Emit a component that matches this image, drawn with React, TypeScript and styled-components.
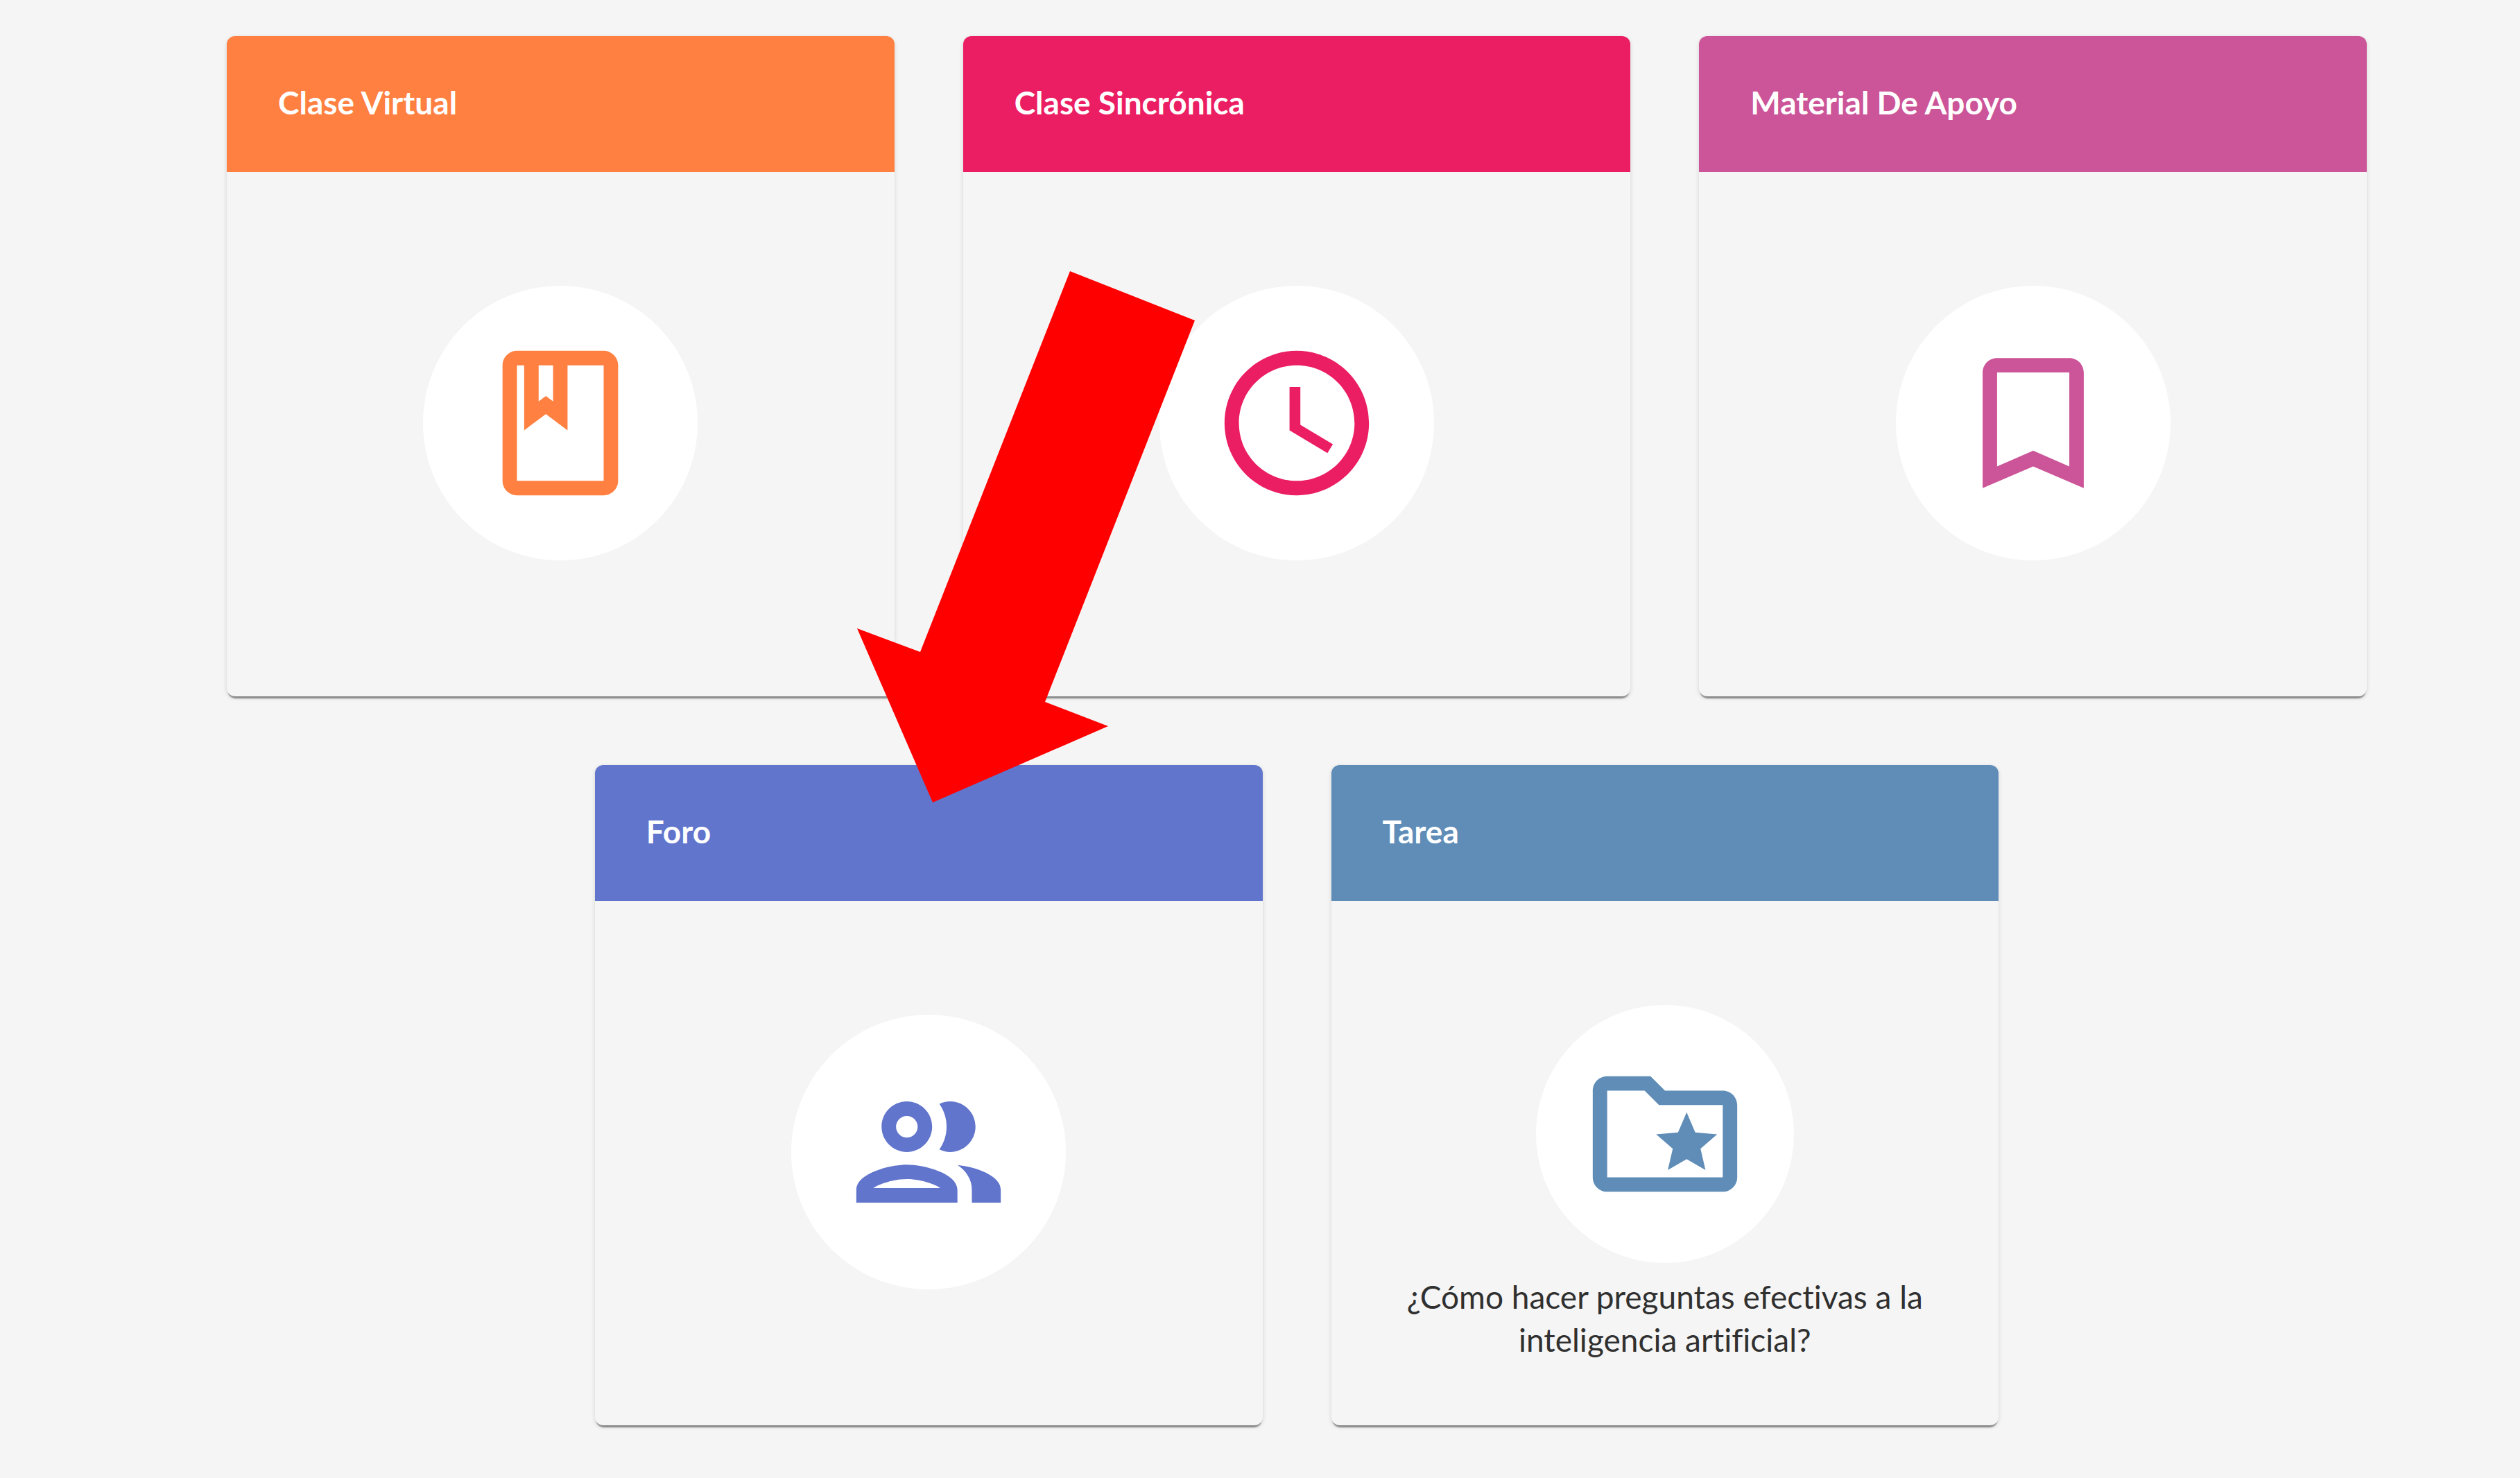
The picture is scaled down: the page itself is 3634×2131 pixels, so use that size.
import React from "react";
import styled, { createGlobalStyle } from "styled-components";
import {
  MdOutlineAccessTime,
  MdOutlineBookmarkBorder,
  MdOutlineClass,
  MdOutlineFolderSpecial,
  MdOutlinePeople,
} from "react-icons/md";

const GlobalStyle = createGlobalStyle`
  *, *::before, *::after { box-sizing: border-box; }
  body {
    margin: 0;
    min-height: 100vh;
    background: #f5f5f5;
    color: #303030;
    font-family: Lato, "Open Sans", sans-serif;
    font-variant-ligatures: none;
  }
`;

const Board = styled.main`
  display: flex;
  flex-wrap: wrap;
  justify-content: center;
  gap: 99px;
  padding: 52px 221px 72px 327px;
`;

const Card = styled.article`
  position: relative;
  width: calc((100% - 198px) / 3);
  border-radius: 12px;
  background: #f5f5f5;
  box-shadow:
    0 5px 2px -2px rgba(0, 0, 0, 0.4),
    0 2px 6px rgba(0, 0, 0, 0.14);
`;

const CardHeader = styled.header<{ $color: string }>`
  display: flex;
  align-items: center;
  height: 196px;
  padding: 0 74px 4px;
  border-radius: 12px 12px 0 0;
  background: ${(p) => p.$color};
`;

const CardTitle = styled.h2`
  margin: 0;
  color: #fff;
  font-size: 46px;
  font-weight: 700;
  line-height: 62px;
`;

const CardBody = styled.div<{ $compact: boolean }>`
  display: flex;
  flex-direction: column;
  align-items: center;
  gap: 18px;
  min-height: 756px;
  padding: ${(p) => (p.$compact ? 150 : 164)}px 82px 40px;
`;

const IconDisc = styled.div<{ $color: string; $compact: boolean }>`
  display: grid;
  place-items: center;
  flex: none;
  width: ${(p) => (p.$compact ? 372 : 396)}px;
  aspect-ratio: 1;
  border-radius: 50%;
  background: #fff;
  color: ${(p) => p.$color};
  font-size: 250px;
`;

const Caption = styled.p`
  margin: 0;
  font-size: 46px;
  line-height: 62px;
  text-align: center;
`;

const Pointer = styled.svg`
  position: absolute;
  z-index: 1;
  top: -712px;
  left: calc(50% - 103px);
  width: 487px;
  height: 767px;
  fill: #ff0000;
`;

type Activity = {
  title: string;
  color: string;
  Icon: React.ComponentType;
  caption?: string;
  highlighted?: boolean;
};

const activities: Activity[] = [
  { title: "Clase Virtual", color: "#ff8040", Icon: MdOutlineClass },
  { title: "Clase Sincrónica", color: "#eb1e63", Icon: MdOutlineAccessTime },
  { title: "Material De Apoyo", color: "#cc5498", Icon: MdOutlineBookmarkBorder },
  { title: "Foro", color: "#6175cc", Icon: MdOutlinePeople, highlighted: true },
  {
    title: "Tarea",
    color: "#5f8db7",
    Icon: MdOutlineFolderSpecial,
    caption: "¿Cómo hacer preguntas efectivas a la inteligencia artificial?",
  },
];

function ActivityCard({ title, color, Icon, caption, highlighted }: Activity) {
  const compact = Boolean(caption);
  return (
    <Card>
      <CardHeader $color={color}>
        <CardTitle>{title}</CardTitle>
      </CardHeader>
      <CardBody $compact={compact}>
        <IconDisc $color={color} $compact={compact}>
          <Icon />
        </IconDisc>
        {caption && <Caption>{caption}</Caption>}
      </CardBody>
      {highlighted && (
        <Pointer viewBox="0 0 487 767" aria-hidden="true">
          <polygon points="307,0 487,71 271,621 362,656 109,766 0,515 91,549" />
        </Pointer>
      )}
    </Card>
  );
}

export default function App() {
  return (
    <>
      <GlobalStyle />
      <Board>
        {activities.map((activity) => (
          <ActivityCard key={activity.title} {...activity} />
        ))}
      </Board>
    </>
  );
}
